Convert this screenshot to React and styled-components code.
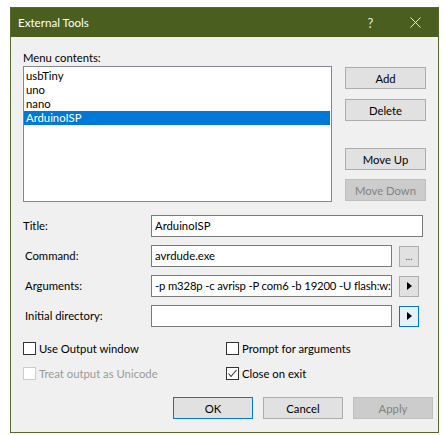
import React from 'react';
import styled, { createGlobalStyle } from 'styled-components';

const GlobalStyle = createGlobalStyle`
  html, body {
    margin: 0;
    padding: 0;
    background: #ffffff;
  }
  body {
    font-family: Lato, "Noto Sans", sans-serif;
    font-size: 11.3px;
    color: #000;
  }
`;

const Page = styled.div`
  padding: 7px 0 0 10px;
`;

const Window = styled.div`
  width: 427px;
  height: 424px;
  border: 1px solid #55692a;
  background: #f0f0f0;
  display: flex;
  flex-direction: column;
`;

const TitleBar = styled.div`
  height: 29px;
  background: #4a5e1f;
  color: #ffffff;
  display: flex;
  align-items: center;
  padding: 0 0 0 7px;
  font-size: 11.6px;
`;

const TitleText = styled.span`
  flex: 1;
`;

const TitleIcon = styled.span`
  width: 45px;
  height: 29px;
  display: flex;
  align-items: center;
  justify-content: center;
  color: #e8ece0;
  font-size: 13px;
`;

const Body = styled.div`
  flex: 1;
  padding: 13px 5px 0 12px;
  display: flex;
  flex-direction: column;
`;

const Upper = styled.div`
  display: flex;
  gap: 13px;
  padding-right: 11px;
`;

const ListColumn = styled.div`
  display: flex;
  flex-direction: column;
`;

const Label = styled.div`
  height: 16px;
  line-height: 16px;
  padding-left: ${p => p.$indent || 0}px;
  white-space: nowrap;
`;

const ListBox = styled.div`
  width: 307px;
  height: 132px;
  border: 1px solid #828790;
  background: #ffffff;
  padding-top: 2px;
`;

const ListItem = styled.div`
  height: 14px;
  line-height: 14px;
  padding-left: 2px;
  margin-right: 1px;
  background: ${p => (p.$selected ? '#0078d7' : 'transparent')};
  color: ${p => (p.$selected ? '#ffffff' : '#000000')};
`;

const ButtonColumn = styled.div`
  display: flex;
  flex-direction: column;
  padding-top: 17px;
`;

const Button = styled.button`
  font-family: inherit;
  font-size: 11.3px;
  width: ${p => p.$width || 81}px;
  height: 22px;
  margin-top: ${p => p.$top || 0}px;
  padding: 0;
  box-sizing: border-box;
  background: ${p => (p.$disabled ? '#cccccc' : '#e1e1e1')};
  border: 1px solid ${p => (p.$default ? '#0078d7' : p.$disabled ? '#bfbfbf' : '#adadad')};
  color: ${p => (p.$disabled ? '#838383' : '#000000')};
`;

const Form = styled.div`
  margin-top: 13px;
  display: grid;
  grid-template-columns: 128px minmax(0, 1fr);
  row-gap: 8px;
  padding-right: 10px;
  align-items: center;
`;

const FieldRow = styled.div`
  display: flex;
  gap: 7px;
  align-items: center;
  min-width: 0;
`;

const Input = styled.div`
  flex: 1;
  min-width: 0;
  height: 22px;
  box-sizing: border-box;
  border: 1px solid #7a7a7a;
  background: #ffffff;
  padding: 0 2px 0 3px;
  line-height: 20px;
  white-space: nowrap;
  overflow: hidden;
  letter-spacing: ${p => (p.$tight ? '-0.15px' : 'normal')};
`;

const SmallButton = styled.div`
  flex: none;
  width: 20px;
  height: 21px;
  box-sizing: border-box;
  margin-right: 4px;
  border: 1px solid ${p => (p.$focused ? '#0078d7' : '#adadad')};
  background: ${p => (p.$focused ? '#e5f1fb' : '#e1e1e1')};
  display: flex;
  align-items: center;
  justify-content: center;
  color: #555;
  font-size: 10px;
  line-height: 1;
`;

const Checks = styled.div`
  margin-top: 13px;
  display: grid;
  grid-template-columns: 203px 1fr;
  row-gap: 9px;
`;

const CheckItem = styled.div`
  display: flex;
  align-items: center;
  gap: 3px;
  height: 16px;
  color: ${p => (p.$disabled ? '#9a9a9a' : '#000')};
`;

const Box = styled.span`
  width: 13px;
  height: 13px;
  box-sizing: border-box;
  border: 1px solid ${p => (p.$disabled ? '#cccccc' : '#333333')};
  background: #ffffff;
  display: flex;
  align-items: center;
  justify-content: center;
`;

const Footer = styled.div`
  margin-top: 16px;
  display: flex;
  justify-content: flex-end;
  gap: 10px;
`;

const Play = () => (
  <svg width="5" height="8" viewBox="0 0 5 8">
    <polygon points="0,0 5,4 0,8" fill="#000" />
  </svg>
);

const Check = ({ checked, disabled, children }) => (
  <CheckItem $disabled={disabled}>
    <Box $disabled={disabled}>
      {checked && (
        <svg width="11" height="11" viewBox="0 0 11 11">
          <polyline points="1.5,5.5 4,8.5 9.5,2" fill="none" stroke="#333" strokeWidth="1.1" />
        </svg>
      )}
    </Box>
    {children}
  </CheckItem>
);

export default function App() {
  const items = ['usbTiny', 'uno', 'nano', 'ArduinoISP'];
  return (
    <Page>
      <GlobalStyle />
      <Window>
        <TitleBar>
          <TitleText>External Tools</TitleText>
          <TitleIcon>?</TitleIcon>
          <TitleIcon>
            <svg width="11" height="11" viewBox="0 0 11 11">
              <path d="M0.5 0.5 L10.5 10.5 M10.5 0.5 L0.5 10.5" stroke="#e8ece0" strokeWidth="1" />
            </svg>
          </TitleIcon>
        </TitleBar>
        <Body>
          <Upper>
            <ListColumn>
              <Label>Menu contents:</Label>
              <ListBox>
                {items.map(it => (
                  <ListItem key={it} $selected={it === 'ArduinoISP'}>{it}</ListItem>
                ))}
              </ListBox>
            </ListColumn>
            <ButtonColumn>
              <Button>Add</Button>
              <Button $top={10}>Delete</Button>
              <Button $top={27}>Move Up</Button>
              <Button $top={9} $disabled>Move Down</Button>
            </ButtonColumn>
          </Upper>
          <Form>
            <Label>Title:</Label>
            <FieldRow>
              <Input>ArduinoISP</Input>
            </FieldRow>
            <Label $indent={2}>Command:</Label>
            <FieldRow>
              <Input>avrdude.exe</Input>
              <SmallButton>...</SmallButton>
            </FieldRow>
            <Label $indent={2}>Arguments:</Label>
            <FieldRow>
              <Input $tight>-p m328p -c avrisp -P com6 -b 19200 -U flash:w:</Input>
              <SmallButton><Play /></SmallButton>
            </FieldRow>
            <Label $indent={2}>Initial directory:</Label>
            <FieldRow>
              <Input />
              <SmallButton $focused><Play /></SmallButton>
            </FieldRow>
          </Form>
          <Checks>
            <Check>Use Output window</Check>
            <Check>Prompt for arguments</Check>
            <Check disabled>Treat output as Unicode</Check>
            <Check checked>Close on exit</Check>
          </Checks>
          <Footer>
            <Button $width={80} $default>OK</Button>
            <Button $width={80}>Cancel</Button>
            <Button $width={80} $disabled>Apply</Button>
          </Footer>
        </Body>
      </Window>
    </Page>
  );
}
